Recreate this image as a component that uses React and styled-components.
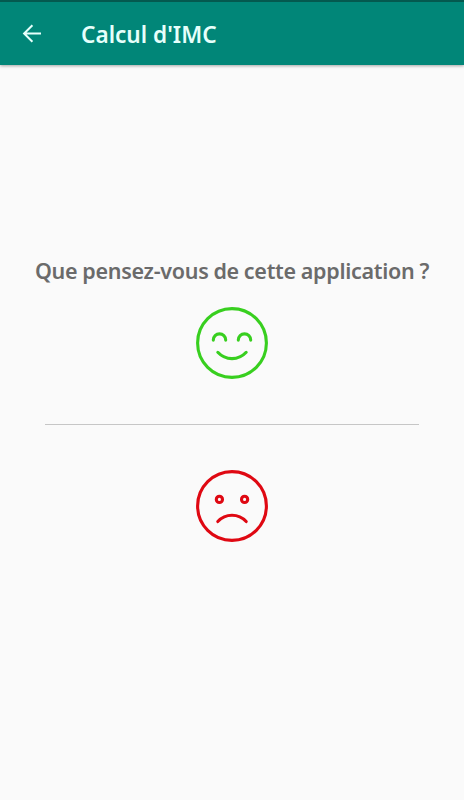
import React from 'react'
import styled, { createGlobalStyle, ThemeProvider } from 'styled-components'

const theme = {
  primary: '#018678',
  primaryDark: '#04594f',
  background: '#fafafa',
  title: '#e6fffb',
  text: '#6b6b6b',
  divider: '#c6c6c6',
  happy: '#38cf1f',
  sad: '#df0812',
  font: "'Noto Sans', 'Open Sans', sans-serif",
}

const GlobalStyle = createGlobalStyle`
  * {
    box-sizing: border-box;
  }

  body {
    margin: 0;
    background: ${theme.background};
  }
`

const StyledScreen = styled.div`
  display: flex;
  flex-direction: column;
  min-height: 100vh;
  background: ${({ theme }) => theme.background};
  font-family: ${({ theme }) => theme.font};
`

const StyledAppBar = styled.header`
  display: flex;
  align-items: center;
  height: 65px;
  padding: 0 20px;
  background: ${({ theme }) => theme.primary};
  border-top: 2px solid ${({ theme }) => theme.primaryDark};
  box-shadow: 0 1px 3px rgba(0, 0, 0, 0.35);
`

const StyledBackButton = styled.button`
  display: flex;
  width: 24px;
  height: 24px;
  margin: 0 37px 0 0;
  padding: 0;
  background: none;
  border: 0;
  color: ${({ theme }) => theme.title};
  cursor: pointer;
`

const StyledTitle = styled.h1`
  margin: 0;
  padding-top: 3px;
  color: ${({ theme }) => theme.title};
  font-size: 22.6px;
  font-weight: 650;
  line-height: 30px;
  white-space: nowrap;
`

const StyledMain = styled.main`
  display: flex;
  flex-direction: column;
  align-items: center;
  padding-top: 191px;
`

const StyledQuestion = styled.h2`
  margin: 0 0 21px;
  color: ${({ theme }) => theme.text};
  font-size: 21.5px;
  font-weight: 600;
  line-height: 30px;
  letter-spacing: -0.28px;
  word-spacing: -0.4px;
  white-space: nowrap;
`

const StyledFaceButton = styled.button`
  display: flex;
  padding: 0;
  background: none;
  border: 0;
  color: ${({ theme, $mood }) => theme[$mood]};
  cursor: pointer;
`

const StyledDivider = styled.hr`
  width: 374px;
  height: 1px;
  margin: 45px 0;
  background: ${({ theme }) => theme.divider};
  border: 0;
`

const BackIcon = () => (
  <svg width="24" height="24" viewBox="0 0 24 24" fill="none" stroke="currentColor" strokeWidth="2">
    <path d="M21 11.5H4.2M12.4 3.2L4.1 11.5l8.3 8.3" />
  </svg>
)

const Face = ({ children }) => (
  <svg
    width="72"
    height="72"
    viewBox="0 0 72 72"
    fill="none"
    stroke="currentColor"
    strokeWidth="3.1"
    strokeLinecap="round"
  >
    <circle cx="36" cy="36" r="34.4" />
    {children}
  </svg>
)

const App = () => (
  <ThemeProvider theme={theme}>
    <GlobalStyle />
    <StyledScreen>
      <StyledAppBar>
        <StyledBackButton aria-label="Retour">
          <BackIcon />
        </StyledBackButton>
        <StyledTitle>Calcul d'IMC</StyledTitle>
      </StyledAppBar>
      <StyledMain>
        <StyledQuestion>Que pensez-vous de cette application ?</StyledQuestion>
        <StyledFaceButton $mood="happy" aria-label="Satisfait">
          <Face>
            <path d="M17.3 33.1a6.2 6.2 0 0 1 12.4 0M42.3 33.1a6.2 6.2 0 0 1 12.4 0" />
            <path d="M21.8 45.3c7.7 8.4 20.7 8.4 28.4 0" />
          </Face>
        </StyledFaceButton>
        <StyledDivider />
        <StyledFaceButton $mood="sad" aria-label="Insatisfait">
          <Face>
            <circle cx="23.4" cy="29.4" r="3.1" />
            <circle cx="48.6" cy="29.4" r="3.1" />
            <path d="M21.8 51.5c7.7-8.4 20.7-8.4 28.4 0" />
          </Face>
        </StyledFaceButton>
      </StyledMain>
    </StyledScreen>
  </ThemeProvider>
)

export default App
